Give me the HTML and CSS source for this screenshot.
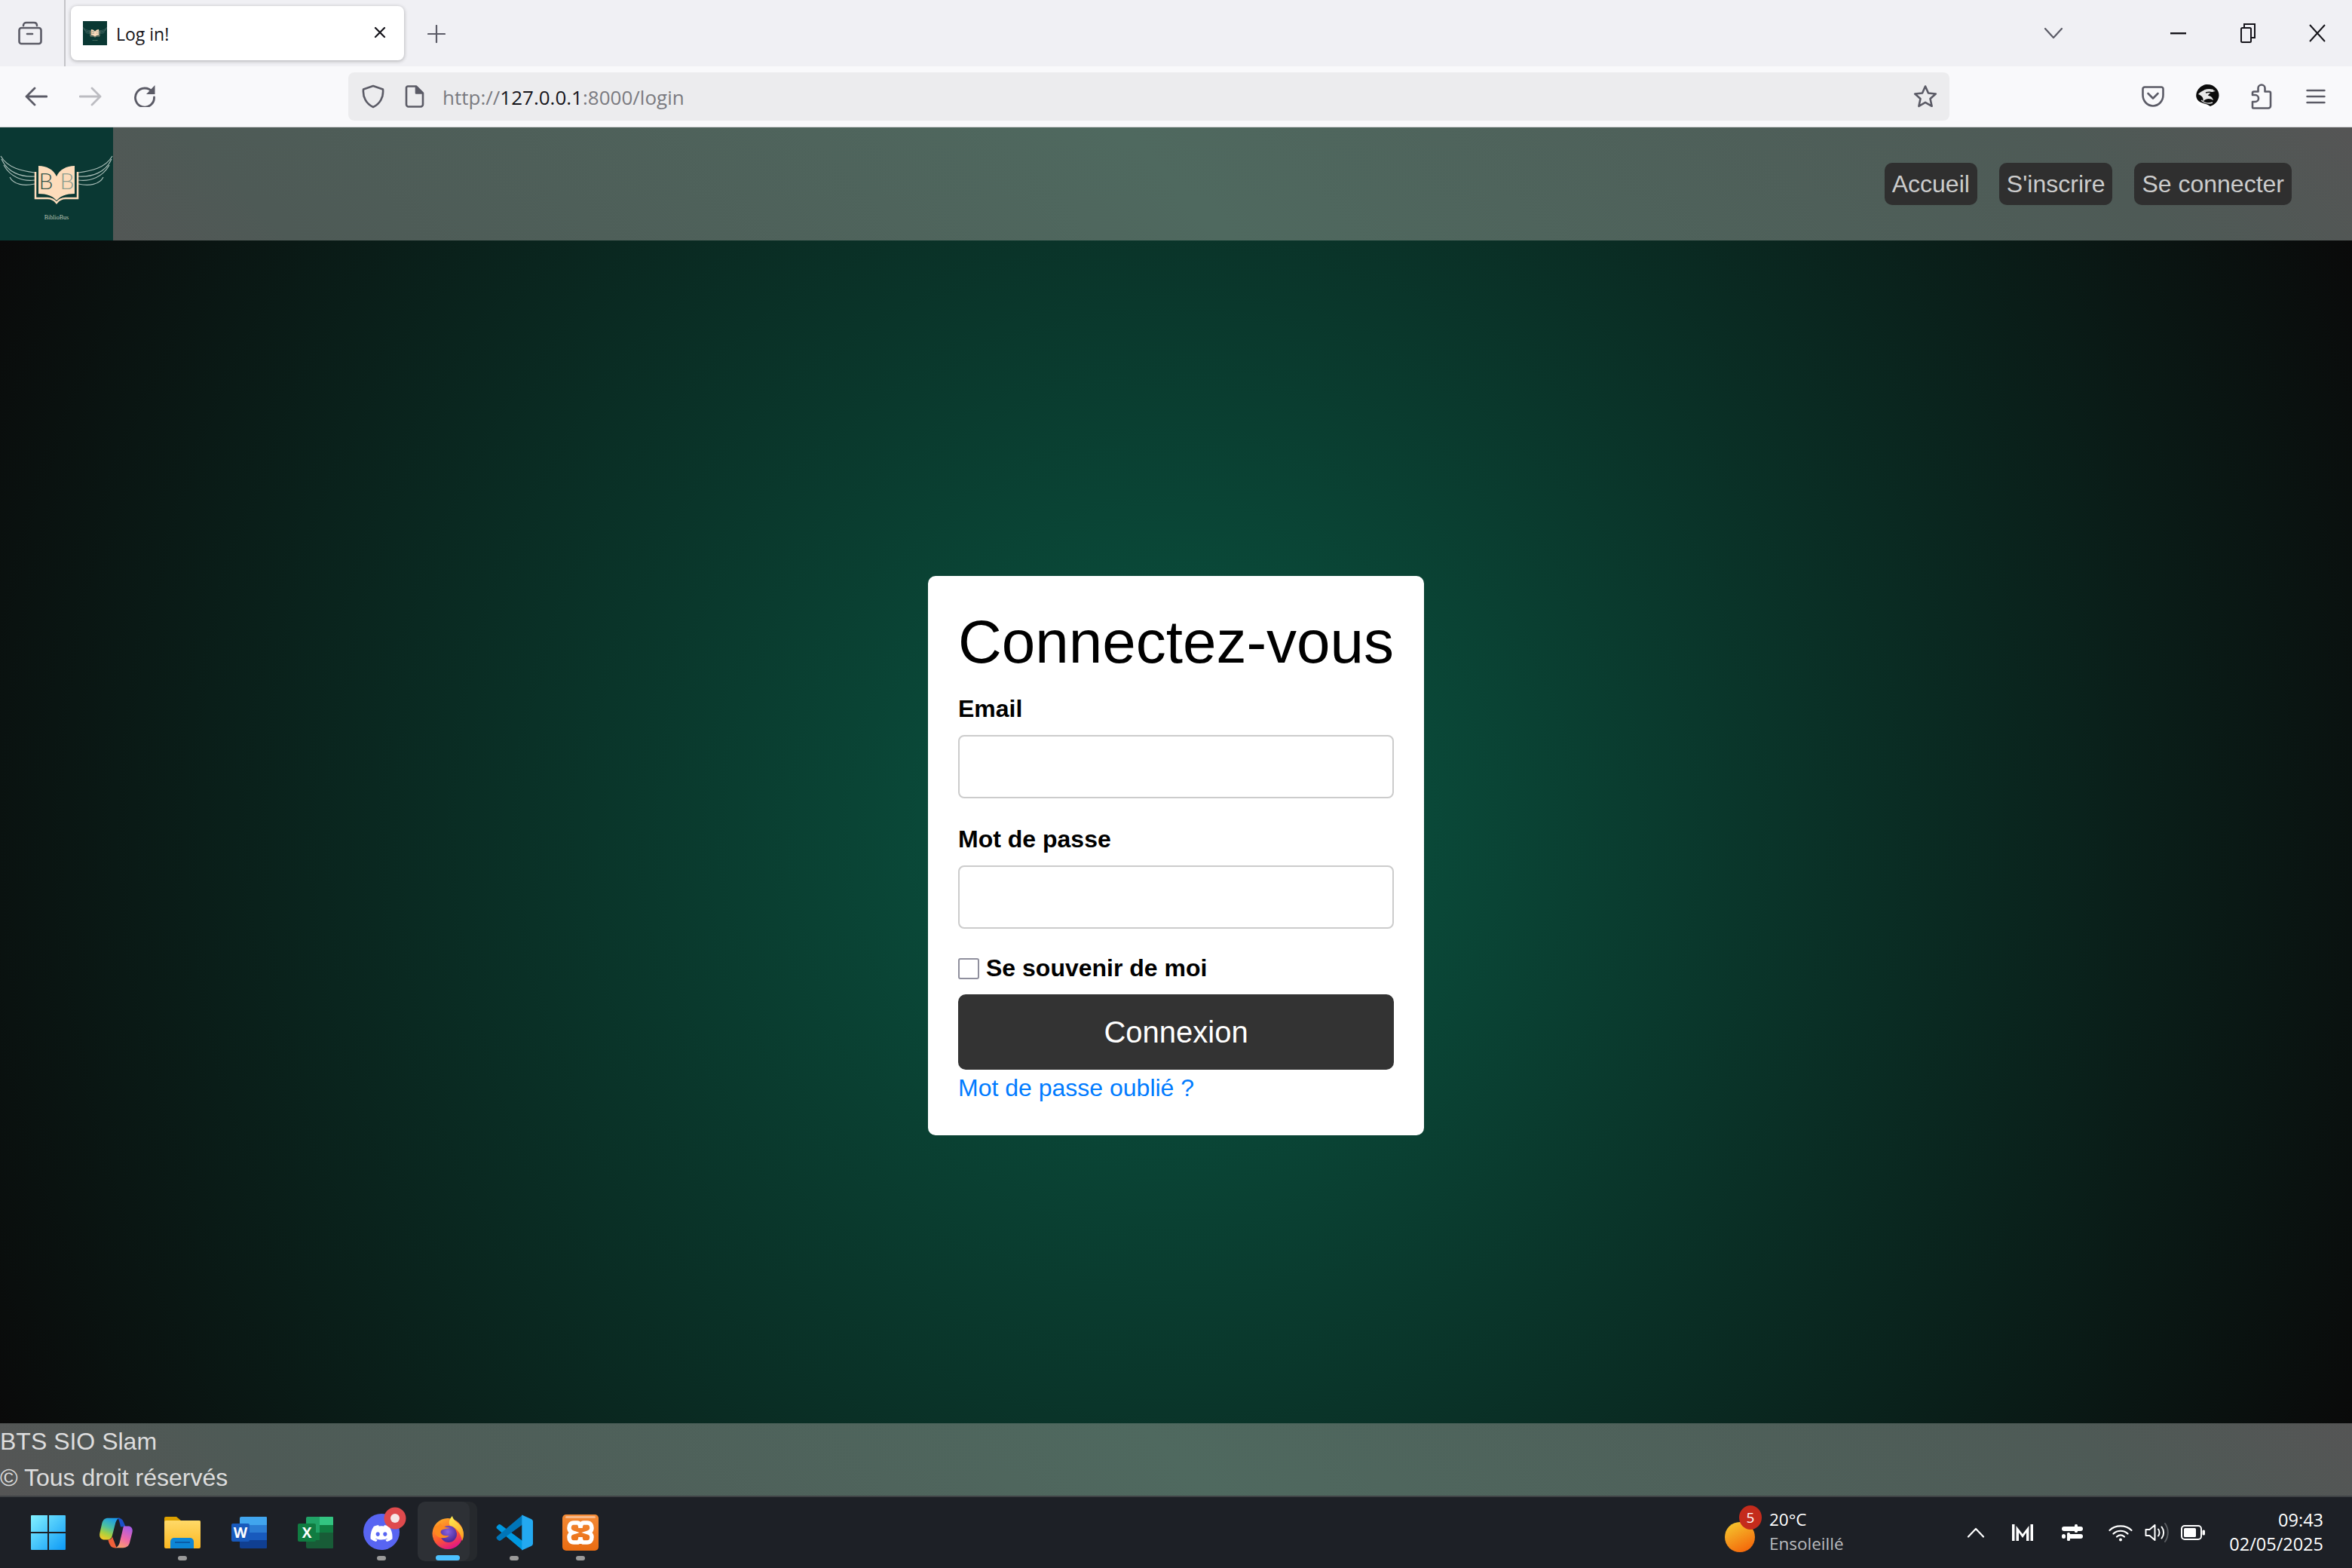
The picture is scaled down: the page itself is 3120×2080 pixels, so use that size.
FILE: index.html
```html
<!DOCTYPE html>
<html lang="fr">
<head>
<meta charset="utf-8">
<title>Log in!</title>
<link rel="stylesheet" href="styles.css">
</head>
<body>
<svg class="defs" width="0" height="0" aria-hidden="true">
  <defs>
    <symbol id="logo" viewBox="0 0 150 150">
      <rect width="150" height="150" fill="#0a3833"/>
      <g fill="none" stroke="#a9bdb7" stroke-width="1.2">
        <path d="M46 60C30 58 10 54 1 38M46 65C28 66 10 60 2 42M46 70C30 72 14 66 5 50M46 75C32 78 18 76 13 66"/>
        <path d="M104 60C120 58 140 54 149 38M104 65C122 66 140 60 148 42M104 70C120 72 136 66 145 50M104 75C118 78 132 76 137 66"/>
      </g>
      <path fill="#fddcbb" d="M51 51C62 51 71 56 75 65C79 56 88 51 99 51V88C88 88 80 91 75 97C70 91 62 88 51 88Z"/>
      <path fill="none" stroke="#fddcbb" stroke-width="2.5" d="M47 59V94H63C68 94 72 96 75 100C78 96 82 94 87 94H103V59"/>
      <text class="logo-bb" x="79.500" y="82" text-anchor="middle"><tspan class="logo-b1">B</tspan><tspan class="logo-b2">B</tspan></text>
      <text class="logo-name" x="75" y="122" text-anchor="middle">BiblioBus</text>
    </symbol>
    <linearGradient id="gWin" x1="0" y1="0" x2="1" y2="1"><stop offset="0" stop-color="#83f1ff"/><stop offset="1" stop-color="#0c99f6"/></linearGradient>
    <linearGradient id="gCopL" x1="0.7" y1="0" x2="0.3" y2="1"><stop offset="0" stop-color="#1898ee"/><stop offset="0.45" stop-color="#4cc0a0"/><stop offset="0.75" stop-color="#a6d042"/><stop offset="1" stop-color="#f0c828"/></linearGradient>
    <linearGradient id="gCopR" x1="0.7" y1="0" x2="0.3" y2="1"><stop offset="0" stop-color="#a95ce6"/><stop offset="0.55" stop-color="#ee69a8"/><stop offset="1" stop-color="#f9a06a"/></linearGradient>
    <linearGradient id="gFolder" x1="0" y1="0" x2="0" y2="1"><stop offset="0" stop-color="#ffd968"/><stop offset="1" stop-color="#fbb822"/></linearGradient>
    <linearGradient id="gFox" x1="0.2" y1="0.1" x2="0.6" y2="1"><stop offset="0" stop-color="#ffa428"/><stop offset="0.55" stop-color="#ff5a2e"/><stop offset="1" stop-color="#e01488"/></linearGradient>
    <linearGradient id="gFlame" x1="0.4" y1="0" x2="0.7" y2="1"><stop offset="0" stop-color="#ffe84f"/><stop offset="1" stop-color="#ff9a1f"/></linearGradient>
    <radialGradient id="gPurple" cx="0.45" cy="0.35" r="0.7"><stop offset="0" stop-color="#8a62e0"/><stop offset="1" stop-color="#45248f"/></radialGradient>
    <linearGradient id="gSun" x1="0.2" y1="0" x2="0.7" y2="1"><stop offset="0" stop-color="#f5c62e"/><stop offset="1" stop-color="#f4660a"/></linearGradient>
    <linearGradient id="gXampp" x1="0" y1="0" x2="0" y2="1"><stop offset="0" stop-color="#f38a35"/><stop offset="1" stop-color="#e96c12"/></linearGradient>
  </defs>
</svg>

<header class="tabbar">
  <div class="cell cell-side">
    <svg width="32" height="32" viewBox="0 0 32 32" fill="none" stroke="#5b5b66" stroke-width="2.6" stroke-linecap="round" stroke-linejoin="round"><path d="M7 6C7 3 9 2 11 2H21C23 2 25 3 25 6"/><rect x="1.5" y="9" width="29" height="21" rx="3"/><path d="M12 17H19"/></svg>
  </div>
  <div class="tab-divider"></div>
  <div class="tab">
    <svg class="favicon" width="32" height="32"><use href="#logo"/></svg>
    <span class="tab-title">Log in!</span>
    <svg class="tab-close" width="16" height="16" viewBox="0 0 16 16" stroke="#15141a" stroke-width="2.2" stroke-linecap="round"><path d="M2 2L14 14M14 2L2 14"/></svg>
  </div>
  <div class="cell cell-new">
    <svg width="24" height="24" viewBox="0 0 24 24" stroke="#5b5b66" stroke-width="2.2" stroke-linecap="round"><path d="M12 1V23M1 12H23"/></svg>
  </div>
  <div class="cell cell-list">
    <svg width="26" height="16" viewBox="0 0 26 16" fill="none" stroke="#5b5b66" stroke-width="2.2" stroke-linecap="round" stroke-linejoin="round"><path d="M2 2L13 14L24 2"/></svg>
  </div>
  <div class="winbtn"><svg width="22" height="4" viewBox="0 0 22 4"><rect width="21" height="2.4" y="1" fill="#15141a"/></svg></div>
  <div class="winbtn"><svg width="20" height="28" viewBox="0 0 20 28" fill="none" stroke="#15141a" stroke-width="2"><rect x="1" y="7" width="13" height="19" rx="1.5"/><path d="M5 6V2H19V20H15"/></svg></div>
  <div class="winbtn"><svg width="24" height="24" viewBox="0 0 24 24" stroke="#15141a" stroke-width="2"><path d="M2 1L22 23M22 1L2 23"/></svg></div>
</header>

<div class="toolbar">
  <div class="cell cell-nav">
    <svg width="30" height="26" viewBox="0 0 30 26" fill="none" stroke="#5b5b66" stroke-width="2.8" stroke-linecap="round" stroke-linejoin="round"><path d="M29 13H3M13 2L2 13L13 24"/></svg>
  </div>
  <div class="cell cell-nav">
    <svg width="30" height="26" viewBox="0 0 30 26" fill="none" stroke="#bcbcc1" stroke-width="2.8" stroke-linecap="round" stroke-linejoin="round"><path d="M1 13H27M17 2L28 13L17 24"/></svg>
  </div>
  <div class="cell cell-nav">
    <svg class="reload" width="30" height="30" viewBox="0 0 30 30" fill="none"><path d="M25 10A12.500 12.500 0 1 0 27.500 17" stroke="#5b5b66" stroke-width="2.800" stroke-linecap="round"/><path d="M28.500 1V13H17Z" fill="#5b5b66"/></svg>
  </div>
  <div class="urlbar">
    <svg class="url-shield" width="30" height="32" viewBox="0 0 30 32" fill="none" stroke="#5b5b66" stroke-width="2.6" stroke-linejoin="round"><path d="M15 2L28 6.5C29 17 24 26 15 30C6 26 1 17 2 6.5Z"/></svg>
    <svg class="url-page" width="26" height="30" viewBox="0 0 26 30" fill="none" stroke="#5b5b66" stroke-width="2.6" stroke-linejoin="round"><path d="M4 1.5H15L24 10.5V25.5A3 3 0 0 1 21 28.5H5A3 3 0 0 1 2 25.5V3.5A2 2 0 0 1 4 1.5Z"/><path d="M15 1.5V10.5H24" fill="#5b5b66"/></svg>
    <span class="url-text">http://<b>127.0.0.1</b>:8000/login</span>
    <svg class="url-star" width="32" height="32" viewBox="0 0 32 32" fill="none" stroke="#5b5b66" stroke-width="2.6" stroke-linejoin="round"><path d="M16 2.5L20 11.5L29.8 12.5L22.5 19L24.6 28.8L16 23.8L7.4 28.8L9.5 19L2.2 12.5L12 11.5Z"/></svg>
  </div>
  <div class="cell cell-nav">
    <svg width="30" height="28" viewBox="0 0 30 28" fill="none" stroke="#5b5b66" stroke-width="2.6" stroke-linecap="round" stroke-linejoin="round"><path d="M4 1.5H26A2.5 2.5 0 0 1 28.5 4V12A13.5 14.5 0 0 1 1.5 12V4A2.5 2.5 0 0 1 4 1.5Z"/><path d="M8.5 10L15 16.5L21.5 10"/></svg>
  </div>
  <div class="cell cell-nav">
    <svg width="32" height="32" viewBox="0 0 32 32"><circle cx="15" cy="17" r="15" fill="#fff"/><path d="M16 0C26 0 32 8 31.500 15C31 22 26 27 20 29C14 24 4 26 1.500 17C0 8 8 0 16 0Z" fill="#0c0c0c"/><path d="M4 13C10 6 20 5 27 9C22 9.500 18 12 17 15C20 15 23 17 24 21C20 18 14 18 10 23C12 18 9 15 4 13Z" fill="#e8e8e8"/><path d="M12 8C16 6.500 20 6.500 24 7.500M8 21C12 24.500 18 26 23 24" fill="none" stroke="#ddd" stroke-width="1.600"/><path d="M14 11C17 10 20 10 23 11" fill="none" stroke="#0c0c0c" stroke-width="1.600"/></svg>
  </div>
  <div class="cell cell-nav">
    <svg width="28" height="34" viewBox="0 0 28 34" fill="none" stroke="#5b5b66" stroke-width="2.6" stroke-linejoin="round"><path d="M3 32.500H23A3 3 0 0 0 26 29.500V12.500A2 2 0 0 0 24 10.500H18.500V6A4.500 4.500 0 0 0 9.500 6V10.500H4A2 2 0 0 0 2 12.500V15H5.500A4 4 0 0 1 5.500 24H2V31.500A1 1 0 0 0 3 32.500Z"/></svg>
  </div>
  <div class="cell cell-nav">
    <svg width="26" height="20" viewBox="0 0 26 20" stroke="#5b5b66" stroke-width="2.4" stroke-linecap="round"><path d="M1.500 2H24.500M1.500 10H24.500M1.500 18H24.500"/></svg>
  </div>
</div>

<nav class="sitenav">
  <svg class="sitelogo" width="150" height="150"><use href="#logo"/></svg>
  <ul class="navlinks">
    <li><a class="navlink" href="#">Accueil</a></li>
    <li><a class="navlink" href="#">S'inscrire</a></li>
    <li><a class="navlink" href="#">Se connecter</a></li>
  </ul>
</nav>

<main class="main">
  <form class="card">
    <h1 class="card-title">Connectez-vous</h1>
    <div class="field">
      <label class="label" for="email">Email</label>
      <input class="input" id="email" type="email">
    </div>
    <div class="field">
      <label class="label" for="pw">Mot de passe</label>
      <input class="input" id="pw" type="password">
    </div>
    <div class="remember">
      <input class="check" id="rem" type="checkbox">
      <label class="label-inline" for="rem">Se souvenir de moi</label>
    </div>
    <button class="submit" type="button">Connexion</button>
    <a class="forgot" href="#">Mot de passe oublié ?</a>
  </form>
</main>

<footer class="sitefoot">
  <p class="foot-line">BTS SIO Slam</p>
  <p class="foot-line">© Tous droit réservés</p>
</footer>

<div class="taskbar">
  <div class="apps">
    <div class="app app-start">
      <svg width="46" height="46" viewBox="0 0 46 46"><path fill="url(#gWin)" d="M1 0H22V22H0V1A1 1 0 0 1 1 0ZM24 0H45A1 1 0 0 1 46 1V22H24ZM0 24H22V46H1A1 1 0 0 1 0 45ZM24 24H46V45A1 1 0 0 1 45 46H24Z"/></svg>
    </div>
    <div class="app">
      <svg width="44" height="41" viewBox="0 0 132 122">
        <path fill="url(#gCopL)" d="M35 2C20 2 14 10 10 22L1 62C-2 78 6 88 20 88H34C42 88 48 82 50 74L64 20C68 8 74 2 82 2Z"/>
        <path fill="#1c50c8" d="M72 2C86 2 92 8 96 18L104 36H84C80 20 78 8 72 2Z"/>
        <path fill="#f0603a" d="M34 88C44 88 48 84 51 76L68 120H60C46 120 40 110 34 88Z"/>
        <path fill="url(#gCopR)" d="M97 34H114C128 34 134 46 130 60L120 100C116 114 106 120 94 120H60C70 120 76 112 80 100L92 50C94 42 94 38 97 34Z"/>
      </svg>
    </div>
    <div class="app app-on">
      <svg width="48" height="42" viewBox="0 0 48 42">
        <path fill="#dca000" d="M0 2A2 2 0 0 1 2 0H16L22 5H46A2 2 0 0 1 48 7V14H0Z"/>
        <rect y="5" width="48" height="37" rx="2" fill="url(#gFolder)"/>
        <path fill="#0d86d6" d="M8 42V33A5 5 0 0 1 13 28H34A5 5 0 0 1 39 33V42Z"/>
        <rect x="14" y="33" width="20" height="2" fill="#0a5da8"/>
      </svg>
    </div>
    <div class="app">
      <svg width="47" height="42" viewBox="0 0 47 42">
        <path fill="#41a5ee" d="M13 0H46A1 1 0 0 1 47 1V11H11V2A2 2 0 0 1 13 0Z"/>
        <rect x="11" y="11" width="36" height="10" fill="#2b7cd3"/>
        <rect x="11" y="21" width="36" height="10" fill="#185abd"/>
        <path fill="#103f91" d="M11 31H47V41A1 1 0 0 1 46 42H13A2 2 0 0 1 11 40Z"/>
        <rect y="9" width="24" height="24" rx="2" fill="#185abd"/>
        <text class="office-letter" x="12" y="27.500" text-anchor="middle">W</text>
      </svg>
    </div>
    <div class="app">
      <svg width="47" height="42" viewBox="0 0 47 42">
        <path fill="#21a366" d="M13 0H29V11H11V2A2 2 0 0 1 13 0Z"/>
        <path fill="#33c481" d="M29 0H46A1 1 0 0 1 47 1V11H29Z"/>
        <rect x="11" y="11" width="18" height="10" fill="#21a366"/>
        <rect x="29" y="11" width="18" height="10" fill="#107c41"/>
        <rect x="11" y="21" width="18" height="10" fill="#107c41"/>
        <rect x="29" y="21" width="18" height="10" fill="#185c37"/>
        <path fill="#185c37" d="M11 31H47V41A1 1 0 0 1 46 42H13A2 2 0 0 1 11 40Z"/>
        <rect y="9" width="24" height="24" rx="2" fill="#107c41"/>
        <text class="office-letter" x="12" y="27.500" text-anchor="middle">X</text>
      </svg>
    </div>
    <div class="app app-on">
      <svg class="discord" width="62" height="62" viewBox="0 0 62 62">
        <circle cx="24" cy="38" r="24" fill="#5865f2"/>
        <g transform="translate(9.500 25.500) scale(1.210)"><path fill="#fff" d="M20.317 4.37a19.791 19.791 0 0 0-4.885-1.515.074.074 0 0 0-.079.037c-.21.375-.444.864-.608 1.25a18.27 18.27 0 0 0-5.487 0 12.64 12.64 0 0 0-.617-1.25.077.077 0 0 0-.079-.037A19.736 19.736 0 0 0 3.677 4.37a.07.07 0 0 0-.032.027C.533 9.046-.32 13.58.099 18.057a.082.082 0 0 0 .031.057 19.900 19.900 0 0 0 5.993 3.030.078.078 0 0 0 .084-.028 14.090 14.090 0 0 0 1.226-1.994.076.076 0 0 0-.041-.106 13.107 13.107 0 0 1-1.872-.892.077.077 0 0 1-.008-.128 10.200 10.200 0 0 0 .372-.292.074.074 0 0 1 .077-.010c3.928 1.793 8.180 1.793 12.062 0a.074.074 0 0 1 .078.010c.12.098.246.198.373.292a.077.077 0 0 1-.006.127 12.299 12.299 0 0 1-1.873.892.077.077 0 0 0-.041.107c.36.698.772 1.362 1.225 1.993a.076.076 0 0 0 .084.028 19.839 19.839 0 0 0 6.002-3.030.077.077 0 0 0 .032-.054c.5-5.177-.838-9.674-3.549-13.660a.061.061 0 0 0-.031-.030zM8.020 15.330c-1.183 0-2.157-1.085-2.157-2.419 0-1.333.956-2.419 2.157-2.419 1.210 0 2.176 1.096 2.157 2.420 0 1.333-.956 2.418-2.157 2.418zm7.975 0c-1.183 0-2.157-1.085-2.157-2.419 0-1.333.955-2.419 2.157-2.419 1.210 0 2.176 1.096 2.157 2.420 0 1.333-.946 2.418-2.157 2.418z"/></g>
        <circle cx="42" cy="20" r="14.500" fill="#df4a4d"/>
        <circle cx="42" cy="20" r="6" fill="#f6e6e6"/>
      </svg>
    </div>
    <div class="app app-active">
      <svg width="42" height="44" viewBox="0 0 42 44">
        <circle cx="21" cy="23.500" r="20.500" fill="url(#gFox)"/>
        <path fill="url(#gFlame)" d="M27 0C28 6 34 8 38 13C43 19 43 27 40 33C38 22 32 15 24 13C21 9 24 3 27 0Z"/>
        <circle cx="22" cy="24" r="11" fill="url(#gPurple)"/>
        <path fill="#ff8a1f" d="M3 14C6 12 9 14 11 9C13 14 18 15 24 16C17 17 12 18 11 21C13 26 18 27 23 26C18 31 9 30 5 25C3 22 3 18 3 14Z"/>
      </svg>
    </div>
    <div class="app app-on">
      <svg width="49" height="48" viewBox="0 0 100 98">
        <path fill="#0098e0" d="M2 38Q0 35 2 32L5 29Q9 25 13 28L72 72V97Z"/>
        <path fill="#0075b8" d="M72 1V27L13 70Q9 73 5 69L2 66Q0 63 2 60Z"/>
        <path fill="#23a9f1" d="M70 1L96 13Q100 15 100 19V79Q100 83 96 85L70 97Z"/>
      </svg>
    </div>
    <div class="app app-on">
      <svg width="48" height="48" viewBox="0 0 48 48">
        <rect width="48" height="48" rx="5" fill="url(#gXampp)"/>
        <rect x="4" y="2" width="40" height="3" rx="1.500" fill="#f7b98a"/>
        <path fill="none" stroke="#fff" stroke-width="5.500" d="M15 11H20C22 11 24 14 24 18C24 14 26 11 28 11H33C37 11 39 14 39 18C39 21 37 23 34 24C37 25 39 27 39 30C39 34 37 37 33 37H28C26 37 24 34 24 30C24 34 22 37 20 37H15C11 37 9 34 9 30C9 27 11 25 14 24C11 23 9 21 9 18C9 14 11 11 15 11Z"/>
      </svg>
    </div>
  </div>

  <div class="weather">
    <div class="weather-icon">
      <svg width="50" height="56" viewBox="0 0 50 56"><circle cx="20" cy="34" r="20" fill="url(#gSun)"/></svg>
      <span class="weather-badge">5</span>
    </div>
    <div class="weather-text">
      <span class="weather-temp">20°C</span>
      <span class="weather-desc">Ensoleillé</span>
    </div>
  </div>

  <div class="tray">
    <div class="tray-cell"><svg width="24" height="14" viewBox="0 0 24 14" fill="none" stroke="#fff" stroke-width="2.200" stroke-linecap="round" stroke-linejoin="round"><path d="M2 12.500L12 2L22 12.500"/></svg></div>
    <div class="tray-cell"><svg width="28" height="22" viewBox="0 0 28 22" fill="#fff"><rect x="0" width="3.500" height="22"/><rect x="24.500" width="3.500" height="22"/><path d="M5.500 2L14 13L22.500 2V22H19V11L14 18L9 11V22H5.500Z"/></svg></div>
    <div class="tray-cell"><svg width="28" height="22" viewBox="0 0 28 22" fill="#fff"><rect x="0" y="3" width="28" height="6" rx="3"/><rect x="17" y="0" width="4" height="11" rx="1.500"/><rect x="8" y="13" width="20" height="6" rx="3"/><rect x="0" y="13" width="5" height="6" rx="2.500"/><rect x="7" y="11" width="4" height="11" rx="1.500"/></svg></div>
    <div class="tray-cell"><svg width="32" height="24" viewBox="0 0 32 24" fill="none" stroke="#fff" stroke-width="2.200" stroke-linecap="round"><path d="M1.500 9C9 1.500 23 1.500 30.500 9M6.500 13.500C11.500 8.500 20.500 8.500 25.500 13.500M11 17.500C14 15 18 15 21 17.500"/><circle cx="16" cy="21.500" r="2" fill="#fff" stroke="none"/></svg></div>
    <div class="tray-cell"><svg width="32" height="28" viewBox="0 0 32 28" fill="none" stroke="#fff" stroke-width="2" stroke-linejoin="round" stroke-linecap="round"><path d="M1.500 10V18H6.500L13.500 24V4L6.500 10Z"/><path d="M18 9.500C20 12 20 16 18 18.500M22.500 6.500C26 11 26 17 22.500 21.500"/><path d="M27 2C32 9 32 19 27 26" stroke="#5a5d62"/></svg></div>
    <div class="tray-cell"><svg width="32" height="20" viewBox="0 0 32 20"><rect x="1" y="1" width="26" height="18" rx="4" fill="none" stroke="#fff" stroke-width="2"/><rect x="4" y="4" width="16" height="12" rx="1.500" fill="#fff"/><rect x="28.500" y="6.500" width="3.500" height="7" rx="1.500" fill="#fff"/></svg></div>
  </div>

  <div class="clock">
    <span>09:43</span>
    <span>02/05/2025</span>
  </div>
</div>
</body>
</html>
```
FILE: styles.css
```css
* { box-sizing: border-box; }
html, body { margin: 0; padding: 0; width: 3120px; height: 2080px; overflow: hidden; }
body {
  display: flex;
  flex-direction: column;
  font-family: "Liberation Sans", Arial, sans-serif;
}
.defs { position: absolute; width: 0; height: 0; top: 0; left: 0; }
.logo-bb { font-family: "Lato", sans-serif; font-weight: 300; font-size: 30px; letter-spacing: 9px; }
.logo-b1 { fill: #33544a; }
.logo-b2 { fill: #8c9c8e; }
.logo-name { font-family: "Liberation Serif", serif; font-size: 8px; fill: #b9c4b4; }
.office-letter { font-family: "Open Sans", sans-serif; font-weight: 700; font-size: 19px; fill: #fff; }

.cell { display: flex; align-items: center; justify-content: center; flex: none; }

/* Browser tab strip */
.tabbar {
  flex: none;
  height: 88px;
  display: flex;
  align-items: stretch;
  background: #f0f0f4;
}
.cell-side { width: 80px; }
.tab-divider { width: 2px; margin: 0 7px 0 5px; background: #c4c4c8; flex: none; }
.tab {
  width: 442px;
  margin: 8px 0;
  padding: 0 24px 0 16px;
  display: flex;
  align-items: center;
  background: #fff;
  border-radius: 8px;
  box-shadow: 0 1px 5px rgba(0,0,0,.3);
  flex: none;
}
.favicon { flex: none; }
.tab-title { margin-left: 12px; padding-top: 2px; font: 23px "Open Sans", sans-serif; color: #15141a; flex: 1; }
.tab-close { flex: none; margin-bottom: 2px; }
.cell-new { width: 72px; margin-left: 7px; padding-top: 2px; }
.cell-list { width: 72px; margin-left: auto; margin-right: 84px; }
.winbtn { width: 92px; display: flex; align-items: center; justify-content: center; flex: none; }

/* Browser toolbar */
.toolbar {
  flex: none;
  height: 81px;
  padding: 0 12px 1px;
  display: flex;
  align-items: center;
  background: #f9f9fb;
  border-bottom: 1px solid #d4d4d6;
}
.cell-nav { width: 72px; }
.reload { margin-bottom: 2px; }
.urlbar {
  width: 2124px;
  height: 64px;
  margin: 0 234px;
  padding: 0 16px 0 18px;
  display: flex;
  align-items: center;
  background: #ececee;
  border-radius: 8px;
  flex: none;
}
.url-page { margin-left: 27px; flex: none; }
.url-shield { flex: none; }
.url-text { margin-left: 24px; font: 26px "Open Sans", sans-serif; color: #7a7a80; flex: 1; padding-top: 2px; }
.url-text b { font-weight: 400; color: #15141a; }
.url-star { flex: none; }

/* Site nav */
.sitenav {
  flex: none;
  height: 150px;
  display: flex;
  align-items: center;
  justify-content: space-between;
  padding-right: 80px;
  background: linear-gradient(45deg, #555555 0%, #4e5a56 12%, #4f695f 50%, #4e5a56 88%, #555555 100%);
}
.sitelogo { flex: none; display: block; }
.navlinks { list-style: none; margin: 0; padding: 0; display: flex; gap: 29px; }
.navlink {
  display: block;
  height: 56px;
  padding: 0 10px;
  line-height: 56px;
  font-size: 32px;
  color: #ccc;
  text-decoration: none;
  background: #2f2f2f;
  border-radius: 10px;
}

/* Main area */
.main {
  flex: 1;
  min-height: 0;
  padding-top: 63px;
  display: flex;
  align-items: center;
  justify-content: center;
  background: radial-gradient(circle at 50% 50%, #0a5743 0%, #0a0a0a 100%);
}
.card {
  width: 658px;
  height: 742px;
  padding: 40px;
  background: #fff;
  border-radius: 10px;
  color: #000;
}
.card-title {
  margin: 0 0 24px;
  padding-top: 2px;
  font-size: 80px;
  font-weight: 400;
  line-height: 92px;
  white-space: nowrap;
}
.field { margin-bottom: 36px; }
.label { display: block; margin-bottom: 16px; font-size: 32px; font-weight: 700; line-height: 37px; }
.input {
  display: block;
  width: 100%;
  height: 84px;
  border: 2px solid #ccc;
  border-radius: 8px;
  background: #fff;
  margin: 0;
}
.remember { display: flex; align-items: center; height: 37px; margin: -2px 0 16px; }
.check {
  appearance: none;
  width: 28px;
  height: 28px;
  margin: 0 9px 0 0;
  border: 2px solid #8f8f9d;
  border-radius: 3px;
  background: #fff;
  flex: none;
}
.label-inline { font-size: 32px; font-weight: 700; line-height: 37px; }
.submit {
  display: block;
  width: 100%;
  height: 100px;
  border: 0;
  border-radius: 10px;
  background: #333;
  color: #fff;
  font: 40px "Liberation Sans", Arial, sans-serif;
  padding: 0;
}
.forgot {
  display: block;
  margin-top: 6px;
  font-size: 32px;
  line-height: 37px;
  color: #007bff;
  text-decoration: none;
}

/* Site footer */
.sitefoot {
  flex: none;
  height: 96px;
  background: linear-gradient(45deg, #555555 0%, #4e5a56 12%, #4f695f 50%, #4e5a56 88%, #555555 100%);
  color: #ddd;
  font-size: 32px;
  line-height: 48px;
}
.foot-line { margin: 0; white-space: nowrap; }

/* Windows taskbar */
.taskbar {
  flex: none;
  height: 96px;
  display: flex;
  align-items: stretch;
  padding-left: 20px;
  background: #1d2026;
  border-top: 2px solid #3f4245;
  color: #fff;
  font-family: "Open Sans", sans-serif;
}
.apps { display: flex; flex: none; }
.app {
  position: relative;
  width: 88px;
  display: flex;
  align-items: center;
  justify-content: center;
}
.app-start { margin-right: 2px; }
.app-on::after {
  content: "";
  position: absolute;
  bottom: 10px;
  left: 38px;
  width: 12px;
  height: 6px;
  border-radius: 3px;
  background: #9a9a9a;
}
.app-active::before {
  content: "";
  position: absolute;
  top: 6px;
  bottom: 9px;
  left: 4px;
  right: 15px;
  border-radius: 10px;
  background: #2d3035;
  box-shadow: 10px 0 0 #26292d;
}
.app-active::after {
  content: "";
  position: absolute;
  bottom: 10px;
  left: 28px;
  width: 32px;
  height: 7px;
  border-radius: 4px;
  background: #4cc2ff;
}
.app-active svg { position: relative; }
.discord { margin: -16px 0 0 14px; }
.weather {
  margin-left: auto;
  width: 304px;
  display: flex;
  align-items: center;
  flex: none;
}
.weather-icon { position: relative; width: 59px; height: 56px; margin-left: 2px; flex: none; }
.weather-icon svg { display: block; }
.weather-badge {
  position: absolute;
  left: 19px;
  top: -8px;
  width: 30px;
  height: 32px;
  border-radius: 50%;
  background: #c42b1c;
  font-size: 19px;
  line-height: 32px;
  text-align: center;
}
.weather-text { display: flex; flex-direction: column; font-size: 22.5px; line-height: 32px; padding-bottom: 2px; }
.weather-desc { color: #b9bbbe; }
.tray { display: grid; grid-template-columns: 62px 62px 70px 58px 38px 58px; flex: none; }
.tray-cell { display: flex; align-items: center; justify-content: center; }
.clock {
  width: 144px;
  margin-right: 38px;
  padding-bottom: 2px;
  display: flex;
  flex-direction: column;
  justify-content: center;
  align-items: flex-end;
  font-size: 23.5px;
  line-height: 32px;
  white-space: nowrap;
  flex: none;
}
```
